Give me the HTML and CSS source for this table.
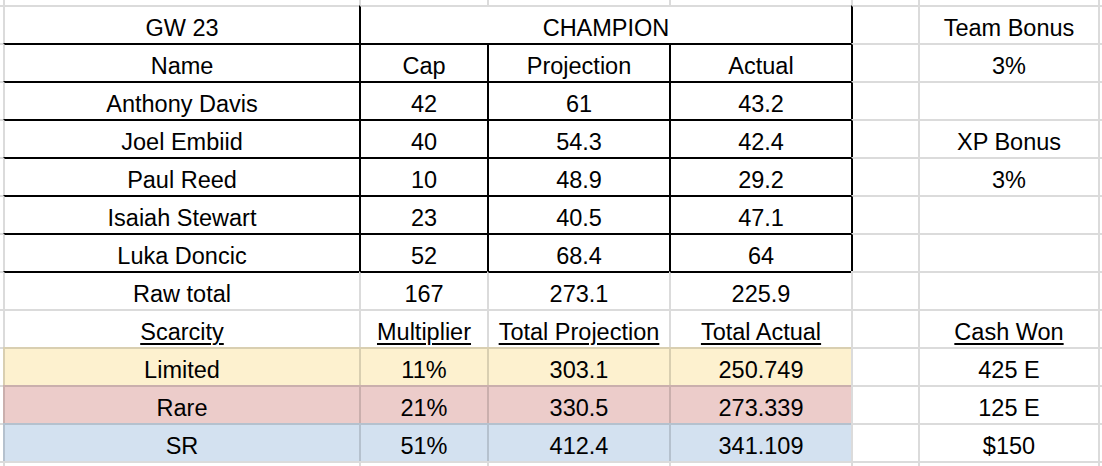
FILE: index.html
```html
<!DOCTYPE html>
<html>
<head>
<meta charset="utf-8">
<title>GW 23</title>
<link rel="stylesheet" href="styles.css">
</head>
<body>
<div class="sheet">
  <div class="c c0 r0"></div><div class="c r0"></div><div class="c r0"></div><div class="c r0"></div><div class="c r0"></div><div class="c r0"></div><div class="c r0"></div><div class="c r0"></div>

  <div class="c c0"></div><div class="c">GW 23</div><div class="c bl span3">CHAMPION</div><div class="c bl"></div><div class="c">Team Bonus</div><div class="c"></div>

  <div class="c c0"></div><div class="c bt">Name</div><div class="c bt bl">Cap</div><div class="c bt bl">Projection</div><div class="c bt bl">Actual</div><div class="c bl"></div><div class="c">3%</div><div class="c"></div>

  <div class="c c0"></div><div class="c bt">Anthony Davis</div><div class="c bt bl">42</div><div class="c bt bl">61</div><div class="c bt bl">43.2</div><div class="c bl"></div><div class="c"></div><div class="c"></div>

  <div class="c c0"></div><div class="c bt">Joel Embiid</div><div class="c bt bl">40</div><div class="c bt bl">54.3</div><div class="c bt bl">42.4</div><div class="c bl"></div><div class="c">XP Bonus</div><div class="c"></div>

  <div class="c c0"></div><div class="c bt">Paul Reed</div><div class="c bt bl">10</div><div class="c bt bl">48.9</div><div class="c bt bl">29.2</div><div class="c bl"></div><div class="c">3%</div><div class="c"></div>

  <div class="c c0"></div><div class="c bt">Isaiah Stewart</div><div class="c bt bl">23</div><div class="c bt bl">40.5</div><div class="c bt bl">47.1</div><div class="c bl"></div><div class="c"></div><div class="c"></div>

  <div class="c c0"></div><div class="c bt">Luka Doncic</div><div class="c bt bl">52</div><div class="c bt bl">68.4</div><div class="c bt bl">64</div><div class="c bl"></div><div class="c"></div><div class="c"></div>

  <div class="c c0"></div><div class="c bt">Raw total</div><div class="c bt">167</div><div class="c bt">273.1</div><div class="c bt">225.9</div><div class="c"></div><div class="c"></div><div class="c"></div>

  <div class="c c0"></div><div class="c"><span class="u">Scarcity</span></div><div class="c"><span class="u">Multiplier</span></div><div class="c"><span class="u">Total Projection</span></div><div class="c"><span class="u">Total Actual</span></div><div class="c"></div><div class="c"><span class="u">Cash Won</span></div><div class="c"></div>

  <div class="c c0"></div><div class="c lim">Limited</div><div class="c lim">11%</div><div class="c lim">303.1</div><div class="c lim">250.749</div><div class="c"></div><div class="c">425 E</div><div class="c"></div>

  <div class="c c0"></div><div class="c rare">Rare</div><div class="c rare">21%</div><div class="c rare">330.5</div><div class="c rare">273.339</div><div class="c"></div><div class="c">125 E</div><div class="c"></div>

  <div class="c c0"></div><div class="c sr">SR</div><div class="c sr">51%</div><div class="c sr">412.4</div><div class="c sr">341.109</div><div class="c"></div><div class="c">$150</div><div class="c"></div>

  <div class="c c0 rl"></div><div class="c rl"></div><div class="c rl"></div><div class="c rl"></div><div class="c rl"></div><div class="c rl"></div><div class="c rl"></div><div class="c rl"></div>
</div>
</body>
</html>
```

FILE: styles.css
```css
html, body {
  margin: 0;
  padding: 0;
  background: #ffffff;
}

.sheet {
  display: grid;
  grid-template-columns: 3px 356px 128px 182px 182px 67px 180px 4px;
  grid-template-rows: 5px repeat(12, 38px) 5px;
  width: 1102px;
  height: 466px;
  overflow: hidden;
  font-family: "Liberation Sans", Arial, sans-serif;
  font-size: 23.5px;
  color: #000;
}

.c {
  box-sizing: border-box;
  border-top: 2px solid rgba(0, 0, 0, 0.14);
  border-left: 2px solid rgba(0, 0, 0, 0.14);
  padding-top: 6px;
  line-height: 30px;
  text-align: center;
  white-space: nowrap;
  overflow: hidden;
  background: #fff;
}

.c0 {
  border-left: none;
}

.r0 {
  border-top: none;
  padding: 0;
}

.rl {
  padding: 0;
}

.bt {
  border-top-color: #000;
}

.bl {
  border-left-color: #000;
}

.span3 {
  grid-column: span 3;
}

.u {
  text-decoration: underline;
  text-decoration-thickness: 1.5px;
  text-underline-offset: 3px;
}

.lim {
  background: #fdf1cf;
}

.rare {
  background: #ecccca;
}

.sr {
  background: #d3e1f0;
}
```
